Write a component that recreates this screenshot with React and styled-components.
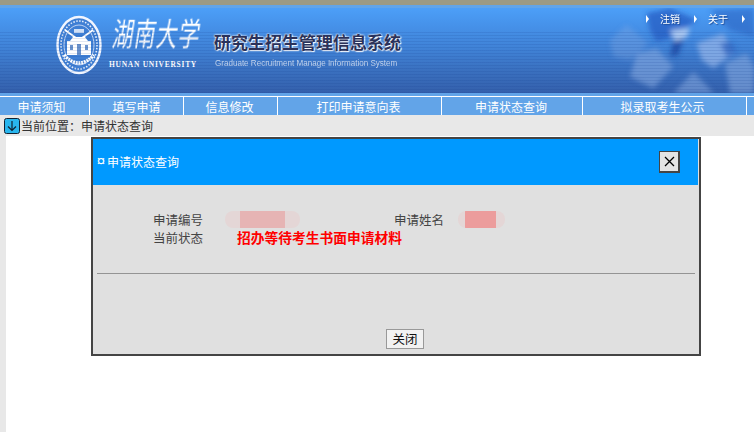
import styled, { createGlobalStyle } from "styled-components"

const GlobalStyle = createGlobalStyle`
  html, body {
    margin: 0;
    padding: 0;
    background: #fff;
    overflow: hidden;
  }
  body {
    font-family: "Noto Sans CJK SC", "Liberation Sans", sans-serif;
    font-size: 12px;
  }
`

const Page = styled.div`
  position: relative;
  width: 754px;
  height: 432px;
  overflow: hidden;
  background: #fff;
`
const TopStripe = styled.div`
  height: 5px;
  background: #9c9a84;
`
const BlueLine = styled.div`
  height: ${(p) => p.$height}px;
  background: #62a4e8;
`
const WhiteLine = styled.div`
  height: 1px;
  background: #fff;
`
const Banner = styled.header`
  position: relative;
  height: 85px;
  overflow: hidden;
  display: flex;
  align-items: flex-start;
  padding-left: 56px;
  background: linear-gradient(180deg, #4c9ff8 0%, #4692ea 20%, #4082d6 48%, #3a70bf 74%, #3460ac 100%);
  &::after {
    content: "";
    position: absolute;
    inset: 24px 0 0 0;
    background: repeating-linear-gradient(180deg, rgba(20, 60, 140, 0.13) 0 1px, transparent 1px 3px);
    pointer-events: none;
  }
`
const Decoration = styled.svg`
  position: absolute;
  right: 0;
  top: -8px;
`
const Seal = styled.svg`
  flex: none;
  margin-top: 7px;
  filter: blur(0.5px);
`
const LogoText = styled.div`
  flex: none;
  width: 92px;
  margin: 14px 0 0 7px;
  color: #fff;
`
const Calligraphy = styled.div`
  font-size: 21px;
  line-height: 38px;
  font-weight: 400;
  letter-spacing: 1px;
  white-space: nowrap;
  transform: skewX(-9deg) scaleY(1.5);
  transform-origin: left bottom;
  filter: blur(0.4px);
`
const UniversityName = styled.div`
  font-family: "Liberation Serif", serif;
  font-size: 7.5px;
  font-weight: 700;
  line-height: 10px;
  letter-spacing: 0.72px;
  white-space: nowrap;
`
const SystemName = styled.div`
  flex: none;
  margin: 23px 0 0 13px;
`
const SystemTitle = styled.div`
  font-size: 17px;
  line-height: 22px;
  font-weight: 700;
  color: #2b3158;
  white-space: nowrap;
  text-shadow: 0 0 2px #fff, 0 0 2px #fff, 1px 1px 1px #fff;
`
const SystemSubtitle = styled.div`
  font-family: "Liberation Sans", sans-serif;
  font-size: 9.6px;
  line-height: 12px;
  margin-top: 4px;
  margin-left: 1px;
  color: #c6d6ee;
  white-space: nowrap;
  transform: scaleX(0.84);
  transform-origin: left center;
`
const TopLinks = styled.nav`
  position: absolute;
  top: 4px;
  left: 646px;
  display: flex;
  gap: 14px;
  white-space: nowrap;
  z-index: 1;
`
const TopLink = styled.span`
  display: flex;
  align-items: center;
  gap: 11px;
  color: #fff;
  font-size: 10px;
  line-height: 14px;
  text-shadow: 1px 1px 1px #1f4a94;
  &::before {
    content: "";
    border-left: 3px solid #fff;
    border-top: 4px solid transparent;
    border-bottom: 4px solid transparent;
  }
`
const Menu = styled.nav`
  display: flex;
  height: 18px;
  background: #62a4e8;
`
const MenuItem = styled.div`
  flex: none;
  width: ${(p) => p.$width}px;
  box-sizing: border-box;
  border-right: ${(p) => (p.$last ? "none" : "1px solid #fff")};
  padding-right: ${(p) => p.$shift || 0}px;
  text-align: center;
  color: #fff;
  font-size: 12px;
  line-height: 19px;
  white-space: nowrap;
`
const Crumb = styled.div`
  display: flex;
  align-items: center;
  gap: 1px;
  height: 21px;
  padding-left: 4px;
  background: #e8e8e8;
  color: #333;
  font-size: 12px;
`
const CrumbIcon = styled.svg`
  flex: none;
`
const Content = styled.div`
  height: 296px;
  border-left: 6px solid #e8e8e8;
  background: #fff;
`
const Dialog = styled.section`
  position: absolute;
  left: 91px;
  top: 137px;
  width: 610px;
  height: 219px;
  box-sizing: border-box;
  border: 2px solid #444;
  background: #e0e0e0;
  display: flex;
  flex-direction: column;
`
const DialogHeader = styled.div`
  display: flex;
  align-items: center;
  justify-content: space-between;
  flex: none;
  height: 46px;
  margin-right: 1px;
  padding: 0 18px 0 2px;
  background: #0099ff;
  color: #fff;
  font-size: 12px;
`
const DialogTitle = styled.span`
  display: flex;
  align-items: center;
  margin-top: -2px;
`
const TitleMark = styled.span`
  width: 12px;
  font-family: "Liberation Sans", sans-serif;
  font-size: 15px;
  font-weight: 400;
  line-height: 16px;
  text-align: center;
`
const CloseBox = styled.button`
  width: 21px;
  height: 22px;
  padding: 0;
  display: flex;
  align-items: center;
  justify-content: center;
  box-sizing: border-box;
  border: 1px solid #444;
  border-right-width: 2px;
  border-bottom-width: 2px;
  background: #e4e4e4;
`
const DialogBody = styled.div`
  flex: none;
  height: 64px;
  padding: 24px 0 0 60px;
  color: #444;
`
const InfoRow = styled.div`
  display: flex;
  align-items: center;
  height: ${(p) => p.$height}px;
  font-size: 12.5px;
`
const Label = styled.span`
  flex: none;
  width: ${(p) => p.$width}px;
  margin-left: ${(p) => p.$offset || 0}px;
  white-space: nowrap;
`
const Blurred = styled.span`
  flex: none;
  width: ${(p) => p.$width}px;
  height: 17px;
  border-radius: 8px;
  background: linear-gradient(
    90deg,
    #e4d6d6 0 ${(p) => p.$from}%,
    ${(p) => p.$color} ${(p) => p.$from}% ${(p) => p.$to}%,
    #e4d6d6 ${(p) => p.$to}% 100%
  );
`
const Status = styled.span`
  color: #f00;
  font-weight: 700;
  font-size: 13.75px;
  white-space: nowrap;
`
const Divider = styled.hr`
  flex: none;
  width: 598px;
  height: 1px;
  margin: 0 0 0 4px;
  border: none;
  background: #949494;
`
const DialogFooter = styled.div`
  flex: none;
  display: flex;
  justify-content: center;
  padding: 55px 0 0 18px;
`
const CloseButton = styled.button`
  width: 38px;
  height: 20px;
  padding: 0;
  box-sizing: border-box;
  border: 1px solid #999;
  background: #f2f2f2;
  color: #111;
  font-family: "Noto Sans CJK SC", sans-serif;
  font-size: 12.5px;
  line-height: 18px;
`

const menuItems = [
  { label: "申请须知", width: 90, shift: 6 },
  { label: "填写申请", width: 94 },
  { label: "信息修改", width: 94, shift: 2 },
  { label: "打印申请意向表", width: 164, shift: 2 },
  { label: "申请状态查询", width: 141, shift: 2 },
  { label: "拟录取考生公示", width: 164, shift: 4 },
  { label: "", width: 7, last: true },
]

function SealLogo() {
  return (
    <Seal width="46" height="60" viewBox="0 0 46 60">
      <ellipse cx="23" cy="30" rx="21.5" ry="28" fill="#3f7fd4" stroke="#f2f6ff" strokeWidth="2.4" />
      <ellipse cx="23" cy="30" rx="18" ry="24" fill="none" stroke="#e4edfb" strokeWidth="1.6" strokeDasharray="1.5 1.5" />
      <ellipse cx="23" cy="30" rx="15" ry="20" fill="none" stroke="#dfe9fa" strokeWidth="0.8" />
      <path d="M9 15 L20 23 M37 15 L26 23" stroke="#fff" strokeWidth="1.8" />
      <path d="M18 14 h10 v4 h-10 Z" fill="#cfe0f7" />
      <path d="M17 22 h12 l3 4 h-18 Z" fill="#fff" />
      <path d="M11 26 h24 v14 h-24 Z" fill="#fff" />
      <path d="M21 29 h4 v11 h-4 Z M14 30 h3 v5 h-3 Z M29 30 h3 v5 h-3 Z" fill="#6a92cc" />
      <path d="M8 40 Q23 56 38 40" fill="none" stroke="#fff" strokeWidth="3.4" strokeDasharray="2 0.8" />
    </Seal>
  )
}

function BannerArt() {
  return (
    <Decoration width="164" height="100" viewBox="0 0 492 300">
      <defs>
        <filter id="soft" x="-20%" y="-20%" width="140%" height="140%">
          <feGaussianBlur stdDeviation="8" />
        </filter>
      </defs>
      <g filter="url(#soft)">
        <path d="M60 120 L110 75 L175 130 L120 180 L70 170 Z" fill="#8db0e6" opacity="0.3" />
        <path d="M140 160 L200 145 L250 200 L190 265 L120 230 Z" fill="#86a9e0" opacity="0.6" />
        <path d="M170 40 L240 24 L320 60 L250 110 L200 125 L180 90 Z" fill="#2458c0" opacity="0.7" />
        <path d="M250 120 L285 100 L265 165 L240 170 Z" fill="#1c4aa4" opacity="0.85" />
        <path d="M240 90 L300 85 L290 112 L255 125 Z" fill="#bcd4f4" opacity="0.85" />
        <path d="M320 130 L400 100 L430 160 L370 205 L335 180 Z" fill="#93b4e8" opacity="0.75" />
        <path d="M390 130 L420 125 L440 150 L410 172 Z" fill="#2a5fbd" opacity="0.7" />
        <path d="M405 190 L470 160 L492 200 L492 280 L420 280 Z" fill="#86a8de" opacity="0.6" />
        <path d="M250 280 L310 215 L372 280 Z" fill="#8fb0e4" opacity="0.5" />
        <path d="M360 30 L492 24 L492 110 L420 90 Z" fill="#2a5fbd" opacity="0.55" />
      </g>
    </Decoration>
  )
}

function App() {
  return (
    <Page>
      <GlobalStyle />
      <TopStripe />
      <BlueLine $height={3} />
      <Banner>
        <BannerArt />
        <SealLogo />
        <LogoText>
          <Calligraphy>湖南大学</Calligraphy>
          <UniversityName>HUNAN UNIVERSITY</UniversityName>
        </LogoText>
        <SystemName>
          <SystemTitle>研究生招生管理信息系统</SystemTitle>
          <SystemSubtitle>Graduate Recruitment Manage Information System</SystemSubtitle>
        </SystemName>
        <TopLinks>
          <TopLink>注销</TopLink>
          <TopLink>关于</TopLink>
          <TopLink>帮助</TopLink>
        </TopLinks>
      </Banner>
      <BlueLine $height={3} />
      <WhiteLine />
      <Menu>
        {menuItems.map((item, i) => (
          <MenuItem key={i} $width={item.width} $last={item.last} $shift={item.shift}>
            {item.label}
          </MenuItem>
        ))}
      </Menu>
      <Crumb>
        <CrumbIcon width="16" height="16" viewBox="0 0 16 16">
          <rect x="0.5" y="0.5" width="15" height="15" rx="2" fill="#29b6ee" stroke="#123" />
          <path d="M8 3 V12 M4 8.5 L8 12.5 L12 8.5" fill="none" stroke="#123" strokeWidth="1.2" />
        </CrumbIcon>
        当前位置：申请状态查询
      </Crumb>
      <Content />
      <Dialog>
        <DialogHeader>
          <DialogTitle>
            <TitleMark>¤</TitleMark>
            申请状态查询
          </DialogTitle>
          <CloseBox>
            <svg width="13" height="13" viewBox="0 0 13 13">
              <path d="M2 2 L11 11 M11 2 L2 11" stroke="#000" strokeWidth="1.3" />
            </svg>
          </CloseBox>
        </DialogHeader>
        <DialogBody>
          <InfoRow $height={20}>
            <Label $width={72}>申请编号</Label>
            <Blurred $width={75} $from={20} $to={80} $color="#e6b4b4" />
            <Label $width={64} $offset={94}>申请姓名</Label>
            <Blurred $width={47} $from={15} $to={80} $color="#ec9c9c" />
          </InfoRow>
          <InfoRow $height={16}>
            <Label $width={84}>当前状态</Label>
            <Status>招办等待考生书面申请材料</Status>
          </InfoRow>
        </DialogBody>
        <Divider />
        <DialogFooter>
          <CloseButton>关闭</CloseButton>
        </DialogFooter>
      </Dialog>
    </Page>
  )
}

export default App
